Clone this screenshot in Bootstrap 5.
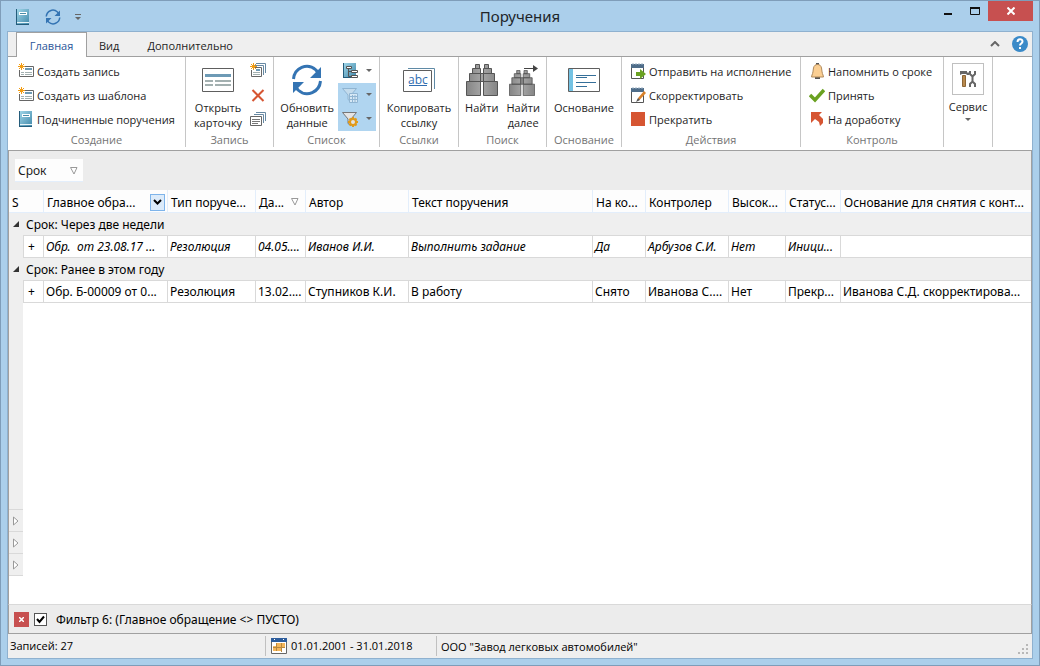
<!DOCTYPE html>
<html lang="ru">
<head>
<meta charset="utf-8">
<meta name="viewport" content="width=device-width, initial-scale=1">
<title>Поручения</title>
<link href="https://cdn.jsdelivr.net/npm/bootstrap@5.3.0/dist/css/bootstrap.min.css" rel="stylesheet">
<style>
  body { font-family: "Open Sans", "Noto Sans", sans-serif; font-size: 11px; line-height: 15px; color: #1e1e1e; }
  button { font: inherit; color: inherit; background: none; border: 0; padding: 0; }
  svg { display: block; flex: none; }
  .app-window { background: #abcfeb; border: 1px solid #7f9db9; padding: 0 6px 6px; }
  .title-bar { height: 30px; padding-left: 8px; }
  .quick-bar { gap: 14px; }
  .title-text { font-family: "Noto Sans", sans-serif; font-size: 15px; line-height: 22px; }
  .win-buttons { height: 20px; }
  .win-close { width: 45px; height: 20px; background: #c75050; }
  .app-frame { border: 1px solid #8fb1cf; background: #efefef; }
  .tab-strip { height: 25px; padding-left: 8px; border-bottom: 1px solid #a0a0a0; }
  .tab-strip .nav-link { height: 25px; padding: 6px 0 0; border: 0; border-radius: 0; color: #1e1e1e; }
  .tab-strip .nav-link.active { width: 71px; height: 26px; padding-top: 5px; background: #fff; border: 1px solid #a0a0a0; border-bottom: 0; color: #2b579a; }
  .ribbon { height: 94px; background: #fff; border-bottom: 1px solid #a0a0a0; }
  .ribbon-group { height: 90px; padding-top: 2px; border-right: 1px solid #c6c6c6; flex: none; }
  .group-body { height: 74px; }
  .group-name { color: #747474; text-align: center; line-height: 14px; }
  .w-create { width: 178px; } .w-record { width: 88px; } .w-list { width: 106px; } .w-link { width: 79px; }
  .w-find { width: 88px; } .w-base { width: 75px; } .w-act { width: 179px; } .w-ctrl { width: 143px; } .w-serv { width: 49px; }
  .cmd { display: flex; align-items: center; gap: 3px; height: 24px; padding-left: 8px; white-space: nowrap; text-align: left; }
  .w-create .cmd { padding-left: 10px; }
  .w-record .cmd { padding-left: 6px; }
  .w-record .group-body { padding-left: 6px; }
  .w-list .group-body { padding-right: 3px; }
  .cmd-big { display: flex; flex-direction: column; align-items: center; padding-top: 5px; white-space: nowrap; }
  .w-record .cmd-big { width: 52px; }
  .cmd-big svg { margin-bottom: 4px; }
  .cmd-split { display: flex; align-items: center; gap: 8px; width: 38px; height: 24px; padding-left: 4px; }
  .cmd-split.on { background: #b0d5f0; }
  .tool-box { width: 32px; height: 32px; border: 1px solid #c0c0c0; padding: 7px; margin: -1px 0 4px; }
  .grid-pane { background: #fff; border-left: 1px solid #a0a0a0; border-right: 1px solid #a0a0a0; min-height: 0; font-family: "Noto Sans", sans-serif; font-size: 12px; }
  .group-panel { height: 39px; padding: 8px 6px; background: #ececec; }
  .group-chip { width: 68px; height: 23px; padding: 1px 5px 0 3px; background: #fdfdfd; border-bottom: 1px solid #e3eefb; }
  .task-grid { table-layout: fixed; width: 100%; border-collapse: separate; border-spacing: 0; color: #000; }
  .task-grid th, .task-grid td { height: 22px; padding: 0 2px; font-weight: 400; white-space: nowrap; overflow: hidden; }
  .task-grid th { height: 23px; padding: 2px 2px 0 3px; background: #fdfdfd; border-right: 1px solid #e3eefb; border-bottom: 1px solid #e3eefb; }
  .task-grid tbody th { height: 22px; padding: 0 4px; background: #efefef; border: 0; }
  .task-grid td { height: 23px; border: 1px solid #d9d9d9; border-left: 0; }
  .task-grid td:first-child { background: #efefef; border-top: 0; border-bottom: 0; }
  .task-grid td:nth-child(2) { padding-right: 6px; text-align: center; font-style: normal; }
  .task-grid td:last-child, .task-grid th:last-child { border-right: 0; }
  .row-title { display: flex; align-items: center; gap: 7px; }
  .c-exp { width: 15px; } .c-plus { width: 20px; } .c-main { width: 124px; } .c-type { width: 88px; } .c-date { width: 50px; }
  .c-author { width: 103px; } .c-text { width: 184px; } .c-onctl { width: 53px; } .c-ctl { width: 83px; } .c-high { width: 57px; } .c-stat { width: 55px; }
  .col-menu { width: 15px; height: 17px; background: #dcebfa; border: 1px solid #7eb4ea; }
  .side-rail { width: 14px; margin-bottom: 28px; background: #efefef; }
  .side-rail button { width: 14px; height: 22px; padding-left: 4px; border-bottom: 1px solid #d9d9d9; }
  .side-rail button:first-child { height: 23px; border-top: 1px solid #d9d9d9; }
  .filter-bar { height: 30px; padding-left: 5px; gap: 5px; background: #ececec; border: 1px solid #a0a0a0; border-top-color: #d9d9d9; color: #000; font-family: "Noto Sans", sans-serif; font-size: 12px; }
  .filter-off { width: 15px; height: 15px; background: #c75050; }
  .filter-bar .form-check-input { width: 13px; height: 13px; margin: 0; border: 1px solid #555; border-radius: 0; background-color: #fff; box-shadow: none; }
  .filter-bar .form-check-input:checked { background-size: 11px 11px; background-image: url("data:image/svg+xml,%3Csvg xmlns='http://www.w3.org/2000/svg' viewBox='0 0 11 11'%3E%3Cpath d='M2 5l2.500 3L9 2.500' fill='none' stroke='%23000' stroke-width='2'/%3E%3C/svg%3E"); }
  .status-bar { height: 24px; color: #000; }
  .status-cell { height: 20px; line-height: 20px; border-right: 1px solid #c0c0c0; }
  .s-count { width: 258px; padding-left: 2px; } .s-period { width: 171px; padding-left: 5px; gap: 4px; }
</style>
</head>
<body>
<svg class="position-absolute" width="0" height="0" aria-hidden="true">
  <defs>
    <linearGradient id="bookfill" x1="0" y1="0" x2="1" y2="1"><stop offset="0" stop-color="#a3d8ea"/><stop offset="1" stop-color="#3f87a9"/></linearGradient>
    <linearGradient id="steel" x1="0" x2="1"><stop offset="0" stop-color="#858585"/><stop offset=".5" stop-color="#a6a6a6"/><stop offset="1" stop-color="#858585"/></linearGradient>
    <symbol id="book" viewBox="0 0 16 16"><path d="M1 0h13v16H1z" fill="url(#bookfill)"/><path d="M1.500 0v16M1 15.500h13" stroke="#245c7b"/><path d="M2 13.500h12" stroke="#e8f4f8"/><path d="M4 3h8v3H4z" fill="#fff"/><path d="M5 4.500h6" stroke="#4a8ca8"/></symbol>
    <symbol id="spark" viewBox="0 0 7 7"><path d="M3.500 0v7M0 3.500h7M1 1l5 5M6 1L1 6" stroke="#f39c12"/></symbol>
    <symbol id="newrec" viewBox="0 0 16 16"><path d="M1.500 3.500h14v10h-14z" fill="#fff" stroke="#666"/><path d="M7 5h7v2H7z" fill="#6d9ab5"/><path d="M3 9.500h3M7 9.500h7M3 11.500h3M7 11.500h7" stroke="#a3b0b0"/><path d="M0 0h6v7H0z" fill="#fff"/><use href="#spark" width="7" height="7"/></symbol>
    <symbol id="newmany" viewBox="0 0 16 16"><path d="M6 .5h9.500V10M5 2.500h8.500V12" fill="none" stroke="#6789a3"/><path d="M1.500 4.500h10v9h-10z" fill="#fff" stroke="#666"/><path d="M6 6h4v2H6z" fill="#6d9ab5"/><path d="M3 9.500h7M3 11.500h7" stroke="#a3b0b0"/><path d="M0 0h5v7H0z" fill="#fff"/><use href="#spark" width="7" height="7"/></symbol>
    <symbol id="copies" viewBox="0 0 16 16"><path d="M6 1.500h9.500V10M4 3.500h9.500V12" fill="none" stroke="#6789a3"/><path d="M.5 5.500h11v9H.5z" fill="#fff" stroke="#666"/><path d="M2 8.500h8M2 10.500h8M2 12.500h6" stroke="#777"/></symbol>
    <symbol id="cross" viewBox="0 0 16 16"><path d="M2.500 3l11 11M13.500 3l-11 11" stroke="#d65532" stroke-width="2"/></symbol>
    <symbol id="card32" viewBox="0 0 32 32"><path d="M.5 4.500h31v23H.5z" fill="#fff" stroke="#5e5e5e"/><path d="M3 10h26v3H3z" fill="#6d9ab5"/><path d="M3 17h8M13 17h16M3 21h8M13 21h16" stroke="#a3b0b0" stroke-width="2"/></symbol>
    <symbol id="refresh" viewBox="0 0 32 32"><path d="M2.500 15C3.500 4 16-2 25 6l3 4M29.500 17c-1 11-13.500 17-22.500 9l-3-4" fill="none" stroke="#3474b3" stroke-width="3"/><path d="M30 3v11H19zM2 29V18h11z" fill="#3474b3"/></symbol>
    <symbol id="tree" viewBox="0 0 16 16"><path d="M1 0h13v15H1z" fill="url(#bookfill)"/><path d="M1.500 0v15M1 14.500h12" stroke="#245c7b"/><path d="M6.500 5v8.500H10M6.500 8.500H10" stroke="#555" fill="none"/><path d="M4.500 3.500h5v2h-5zM9.500 7.500h6v2h-6zM9.500 12.500h6v2h-6z" fill="#fff" stroke="#555"/></symbol>
    <symbol id="funnel" viewBox="0 0 16 16"><path d="M.5 1.500h14L9 8v6.500l-3-2V8z" fill="#e4e4e4" stroke="#777"/></symbol>
    <symbol id="filtgrid" viewBox="0 0 16 16"><path d="M.5 1.500h14L9 8v6.500l-3-2V8z" fill="#c3dbec" stroke="#90b5d2"/><path d="M7.500 6.500h8v9h-8z" fill="#d6e8f5" stroke="#90b5d2"/><path d="M8 9.500h7M8 12.500h7M10.500 8v7M13 8v7" stroke="#90b5d2"/></symbol>
    <symbol id="filtgear" viewBox="0 0 16 16"><use href="#funnel"/><circle cx="11" cy="11" r="3" fill="#e4e4e4" stroke="#e09a1a" stroke-width="2"/><path d="M11 6v2M11 14v2M6 11h2M14 11h2M7.500 7.500L9 9M13 13l1.500 1.500M14.500 7.500L13 9M9 13l-1.500 1.500" stroke="#e09a1a" stroke-width="2"/></symbol>
    <symbol id="arrow" viewBox="0 0 6 4"><path d="M0 0h6L3 3z" fill="#666"/></symbol>
    <symbol id="base32" viewBox="0 0 32 32"><path d="M.5 4.500h31v23H.5z" fill="#fff" stroke="#5e5e5e"/><path d="M1 5h4v22H1z" fill="#74c2e3"/><path d="M8 11.500h20M8 13.500h11M8 18.500h20M8 22.500h11" stroke="#356f99"/></symbol>
    <symbol id="binoc" viewBox="0 0 32 32"><g fill="url(#steel)" stroke="#555"><path d="M9.500 .5h4v4h-4zM18.500 .5h4v4h-4zM6.500 4.500h8v5h-8zM17.500 4.500h8v5h-8zM3.500 9.500h11v8h-11zM17.500 9.500h11v8h-11zM14.500 9.500h3v8h-3zM.5 17.500h14v14H.5zM17.500 17.500h14v14h-14z"/></g></symbol>
    <symbol id="sheet" viewBox="0 0 16 16"><path d="M1.500 3.500h12v12h-12z" fill="#fff" stroke="#555"/><path d="M1 1h13v4H1z" fill="#4f6d89"/><path d="M3 0v2M6 0v2M9 0v2M12 0v2" stroke="#9fb4c6"/></symbol>
    <symbol id="send" viewBox="0 0 16 16"><use href="#sheet"/><path d="M6 9h4V6l6 5-6 5v-3H6z" fill="#6aa121"/></symbol>
    <symbol id="edit" viewBox="0 0 16 16"><use href="#sheet"/><path d="M7 14l1.500-3.500L14 4l2 2-6 6.500z" fill="#d9822b"/><path d="M6 15l2-4 2 2z" fill="#555"/></symbol>
    <symbol id="stop" viewBox="0 0 16 16"><path d="M1 1h14v14H1z" fill="#d65532"/></symbol>
    <symbol id="bell" viewBox="0 0 16 16"><path d="M7 0h3v2H7zM6 14h5v2H6z" fill="#555"/><path d="M3 12c1-2 1-4 1.500-7C5 2.500 6.500 1.500 8.500 1.500S12 2.500 12.500 5c.5 3 .5 5 1.500 7l.5 2h-12z" fill="#fbcf93" stroke="#b08a5c"/></symbol>
    <symbol id="tick" viewBox="0 0 16 16"><path d="M1 8l5 5L15 3" fill="none" stroke="#6aa121" stroke-width="3.500"/></symbol>
    <symbol id="back" viewBox="0 0 16 16"><path d="M2 1h11l-3 3 4 4v4l-3 3-1-4-4-3-4 4z" fill="#d65532"/></symbol>
    <symbol id="flt" viewBox="0 0 8 8"><path d="M.5 .5h6.500L4 7z" fill="#fff" stroke="#999"/></symbol>
    <symbol id="tri" viewBox="0 0 6 6"><path d="M6 0v6H0z" fill="#333"/></symbol>
    <symbol id="side" viewBox="0 0 6 10"><path d="M.5 1v8L5 5z" fill="#fff" stroke="#999"/></symbol>
    <symbol id="cal" viewBox="0 0 16 16"><path d="M.5 1h15v14.500H.5z" fill="#fff" stroke="#666"/><path d="M0 0h16v4H0z" fill="#2d5d9c"/><path d="M3 1.500h1M12 1.500h1" stroke="#fff"/><path d="M5 5h9v5H5zM2 8h12v2H2zM2 10h9v3H2z" fill="#f5b75b"/><path d="M5.500 5v8M10.500 5v9M2 9.500h12" stroke="#b9893f"/></symbol>
  </defs>
</svg>

<div class="app-window vh-100 d-flex flex-column overflow-hidden">
  <header class="title-bar position-relative d-flex flex-shrink-0 align-items-start">
    <div class="quick-bar d-flex align-items-center pt-2">
      <svg width="16" height="16"><use href="#book"/></svg>
      <button type="button" aria-label="Обновить"><svg width="16" height="16" viewBox="0 0 32 32"><use href="#refresh"/></svg></button>
      <button type="button" aria-label="Настройка панели"><svg width="6" height="7"><path d="M0 .5h6" stroke="#666"/><path d="M0 3h6L3 6z" fill="#666"/></svg></button>
    </div>
    <h1 class="title-text position-absolute top-0 start-50 translate-middle-x m-0 pt-1 fw-normal text-dark">Поручения</h1>
    <div class="win-buttons d-flex align-items-center ms-auto">
      <button type="button" aria-label="Свернуть" class="px-2"><svg width="10" height="10"><path d="M0 7h8v2H0z" fill="#111"/></svg></button>
      <button type="button" aria-label="Развернуть" class="px-2"><svg width="10" height="8"><path d="M.5 1h9v6.500h-9z" fill="none" stroke="#111"/><path d="M0 1h10" stroke="#111" stroke-width="2"/></svg></button>
      <button type="button" aria-label="Закрыть" class="win-close d-flex align-items-center justify-content-center"><svg width="8" height="8"><path d="M.5 .5l7 7M7.500 .5l-7 7" stroke="#fff" stroke-width="2"/></svg></button>
    </div>
  </header>

  <div class="app-frame d-flex flex-column flex-grow-1 overflow-hidden">
    <nav class="tab-strip d-flex flex-shrink-0" aria-label="Лента">
      <ul class="nav nav-tabs border-0 flex-grow-1">
        <li class="nav-item"><a class="nav-link active text-center" href="#">Главная</a></li>
        <li class="nav-item ms-2 ps-1"><a class="nav-link" href="#">Вид</a></li>
        <li class="nav-item ms-4 ps-1"><a class="nav-link" href="#">Дополнительно</a></li>
      </ul>
      <div class="d-flex align-items-center gap-2 pe-1">
        <button type="button" aria-label="Свернуть ленту" class="me-1"><svg width="10" height="6"><path d="M1 5l4-4 4 4" fill="none" stroke="#666" stroke-width="2"/></svg></button>
        <button type="button" aria-label="Справка"><svg width="16" height="16"><circle cx="8" cy="8" r="8" fill="#3a8ac8"/><path d="M5.500 6c0-3.500 5-3.500 5-.5 0 2-2.500 2-2.500 4M8 11v2" fill="none" stroke="#fff" stroke-width="2"/></svg></button>
      </div>
    </nav>

    <div class="ribbon d-flex flex-shrink-0 overflow-hidden">
      <section class="ribbon-group w-create">
        <div class="group-body">
          <button type="button" class="cmd"><svg width="16" height="16"><use href="#newrec"/></svg>Создать запись</button>
          <button type="button" class="cmd"><svg width="16" height="16"><use href="#newrec"/></svg>Создать из шаблона</button>
          <button type="button" class="cmd"><svg width="16" height="16"><use href="#book"/></svg>Подчиненные поручения</button>
        </div>
        <div class="group-name">Создание</div>
      </section>
      <section class="ribbon-group w-record">
        <div class="group-body d-flex align-items-start">
          <button type="button" class="cmd-big"><svg width="32" height="32"><use href="#card32"/></svg><span>Открыть<br>карточку</span></button>
          <div>
            <button type="button" class="cmd" aria-label="Создать копию"><svg width="16" height="16"><use href="#newmany"/></svg></button>
            <button type="button" class="cmd" aria-label="Удалить"><svg width="16" height="16"><use href="#cross"/></svg></button>
            <button type="button" class="cmd" aria-label="Дублировать"><svg width="16" height="16"><use href="#copies"/></svg></button>
          </div>
        </div>
        <div class="group-name">Запись</div>
      </section>
      <section class="ribbon-group w-list">
        <div class="group-body d-flex justify-content-end align-items-start gap-1">
          <button type="button" class="cmd-big"><svg width="32" height="32"><use href="#refresh"/></svg><span>Обновить<br>данные</span></button>
          <div>
            <button type="button" class="cmd-split" aria-label="Группировка"><svg width="16" height="16"><use href="#tree"/></svg><svg width="6" height="4"><use href="#arrow"/></svg></button>
            <button type="button" class="cmd-split on" aria-label="Фильтр таблицы"><svg width="16" height="16"><use href="#filtgrid"/></svg><svg width="6" height="4"><use href="#arrow"/></svg></button>
            <button type="button" class="cmd-split on" aria-label="Настройка фильтра"><svg width="16" height="16"><use href="#filtgear"/></svg><svg width="6" height="4"><use href="#arrow"/></svg></button>
          </div>
        </div>
        <div class="group-name">Список</div>
      </section>
      <section class="ribbon-group w-link">
        <div class="group-body d-flex justify-content-center align-items-start">
          <button type="button" class="cmd-big"><svg width="32" height="32"><path d="M5 4.500h26.500V25" fill="none" stroke="#5f8aa6"/><path d="M.5 6.500h28v21H.5z" fill="#fff" stroke="#5e5e5e"/><text x="5" y="20" font-size="12" fill="#2f6db0">abc</text><path d="M6 21.500h18" stroke="#2f6db0"/></svg><span>Копировать<br>ссылку</span></button>
        </div>
        <div class="group-name">Ссылки</div>
      </section>
      <section class="ribbon-group w-find">
        <div class="group-body d-flex justify-content-center align-items-start gap-2">
          <button type="button" class="cmd-big"><svg width="32" height="32"><use href="#binoc"/></svg><span>Найти</span></button>
          <button type="button" class="cmd-big"><svg width="32" height="32"><use href="#binoc" y="6" x="2" width="26" height="26"/><path d="M17 4.500h10" stroke="#444"/><path d="M26 1l5 3.500L26 8z" fill="#444"/></svg><span>Найти<br>далее</span></button>
        </div>
        <div class="group-name">Поиск</div>
      </section>
      <section class="ribbon-group w-base">
        <div class="group-body d-flex justify-content-center align-items-start">
          <button type="button" class="cmd-big"><svg width="32" height="32"><use href="#base32"/></svg><span>Основание</span></button>
        </div>
        <div class="group-name">Основание</div>
      </section>
      <section class="ribbon-group w-act">
        <div class="group-body">
          <button type="button" class="cmd"><svg width="16" height="16"><use href="#send"/></svg>Отправить на исполнение</button>
          <button type="button" class="cmd"><svg width="16" height="16"><use href="#edit"/></svg>Скорректировать</button>
          <button type="button" class="cmd"><svg width="16" height="16"><use href="#stop"/></svg>Прекратить</button>
        </div>
        <div class="group-name">Действия</div>
      </section>
      <section class="ribbon-group w-ctrl">
        <div class="group-body">
          <button type="button" class="cmd"><svg width="16" height="16"><use href="#bell"/></svg>Напомнить о сроке</button>
          <button type="button" class="cmd"><svg width="16" height="16"><use href="#tick"/></svg>Принять</button>
          <button type="button" class="cmd"><svg width="16" height="16"><use href="#back"/></svg>На доработку</button>
        </div>
        <div class="group-name">Контроль</div>
      </section>
      <section class="ribbon-group w-serv d-flex justify-content-center align-items-start">
        <button type="button" class="cmd-big">
          <span class="tool-box"><svg width="16" height="16"><path d="M0 0h7v1.500h2V4H7L6 3 2 3 0 4z" fill="#666"/><path d="M2.500 4.500h3v11h-3z" fill="#b98a4e" stroke="#8c6636"/><path d="M10 0v3l2 2h1l2-2V0M10 16v-3l2-2h1l2 2v3M12.500 5v6" fill="none" stroke="#666" stroke-width="2"/></svg></span>
          <span>Сервис</span>
          <svg class="mt-1" width="6" height="4"><use href="#arrow"/></svg>
        </button>
      </section>
    </div>

    <main class="grid-pane d-flex flex-column flex-grow-1 overflow-hidden">
      <div class="group-panel flex-shrink-0">
        <button type="button" class="group-chip d-flex align-items-center justify-content-between">Срок<svg width="8" height="8"><use href="#flt"/></svg></button>
      </div>
      <table class="task-grid flex-shrink-0">
        <colgroup><col class="c-exp"><col class="c-plus"><col class="c-main"><col class="c-type"><col class="c-date"><col class="c-author"><col class="c-text"><col class="c-onctl"><col class="c-ctl"><col class="c-high"><col class="c-stat"><col></colgroup>
        <thead>
          <tr>
            <th colspan="2" scope="col">S</th>
            <th scope="col"><div class="d-flex align-items-center justify-content-between"><span>Главное обра...</span><button type="button" class="col-menu d-flex align-items-center justify-content-center" aria-label="Фильтр столбца"><svg width="9" height="6"><path d="M1 1l3.500 3.500L8 1" fill="none" stroke="#000" stroke-width="2"/></svg></button></div></th>
            <th scope="col">Тип поруче...</th>
            <th scope="col"><div class="d-flex align-items-center justify-content-between pe-1"><span>Да...</span><svg width="8" height="8"><use href="#flt"/></svg></div></th>
            <th scope="col">Автор</th>
            <th scope="col">Текст поручения</th>
            <th scope="col">На ко...</th>
            <th scope="col">Контролер</th>
            <th scope="col">Высок...</th>
            <th scope="col">Статус...</th>
            <th scope="col">Основание для снятия с конт...</th>
          </tr>
        </thead>
        <tbody>
          <tr><th colspan="12" scope="rowgroup"><span class="row-title"><svg width="6" height="6"><use href="#tri"/></svg>Срок: Через две недели</span></th></tr>
          <tr class="fst-italic"><td></td><td>+</td><td>Обр.&nbsp; от 23.08.17 ...</td><td>Резолюция</td><td>04.05....</td><td>Иванов И.И.</td><td>Выполнить задание</td><td>Да</td><td>Арбузов С.И.</td><td>Нет</td><td>Иници...</td><td></td></tr>
          <tr><th colspan="12" scope="rowgroup"><span class="row-title"><svg width="6" height="6"><use href="#tri"/></svg>Срок: Ранее в этом году</span></th></tr>
          <tr><td></td><td>+</td><td>Обр. Б-00009 от 0...</td><td>Резолюция</td><td>13.02....</td><td>Ступников К.И.</td><td>В работу</td><td>Снято</td><td>Иванова С....</td><td>Нет</td><td>Прекр...</td><td>Иванова С.Д. скорректирова...</td></tr>
        </tbody>
      </table>
      <div class="side-rail d-flex flex-column justify-content-end flex-grow-1">
        <button type="button" aria-label="Развернуть группу 1"><svg width="6" height="10"><use href="#side"/></svg></button>
        <button type="button" aria-label="Развернуть группу 2"><svg width="6" height="10"><use href="#side"/></svg></button>
        <button type="button" aria-label="Развернуть группу 3"><svg width="6" height="10"><use href="#side"/></svg></button>
      </div>
    </main>

    <div class="filter-bar d-flex align-items-center flex-shrink-0">
      <button type="button" class="filter-off d-flex align-items-center justify-content-center" aria-label="Сбросить фильтр"><svg width="5" height="5"><path d="M0 0l5 5M5 0L0 5" stroke="#fff" stroke-width="1.500"/></svg></button>
      <input class="form-check-input" type="checkbox" id="filter6" checked>
      <label for="filter6" class="ps-1">Фильтр 6: (Главное обращение &lt;&gt; ПУСТО)</label>
    </div>

    <footer class="status-bar d-flex align-items-center flex-shrink-0">
      <div class="status-cell s-count">Записей: 27</div>
      <div class="status-cell s-period d-flex align-items-center"><svg width="16" height="16"><use href="#cal"/></svg>01.01.2001 - 31.01.2018</div>
      <div class="flex-grow-1 ps-1">ООО "Завод легковых автомобилей"</div>
      <svg class="align-self-end me-1 mb-1" width="10" height="10"><path d="M8 0h2v2H8zM4 4h2v2H4zM8 4h2v2H8zM0 8h2v2H0zM4 8h2v2H4zM8 8h2v2H8z" fill="#b8b8b8"/></svg>
    </footer>
  </div>
</div>
<script src="https://cdn.jsdelivr.net/npm/bootstrap@5.3.0/dist/js/bootstrap.bundle.min.js"></script>
</body>
</html>
